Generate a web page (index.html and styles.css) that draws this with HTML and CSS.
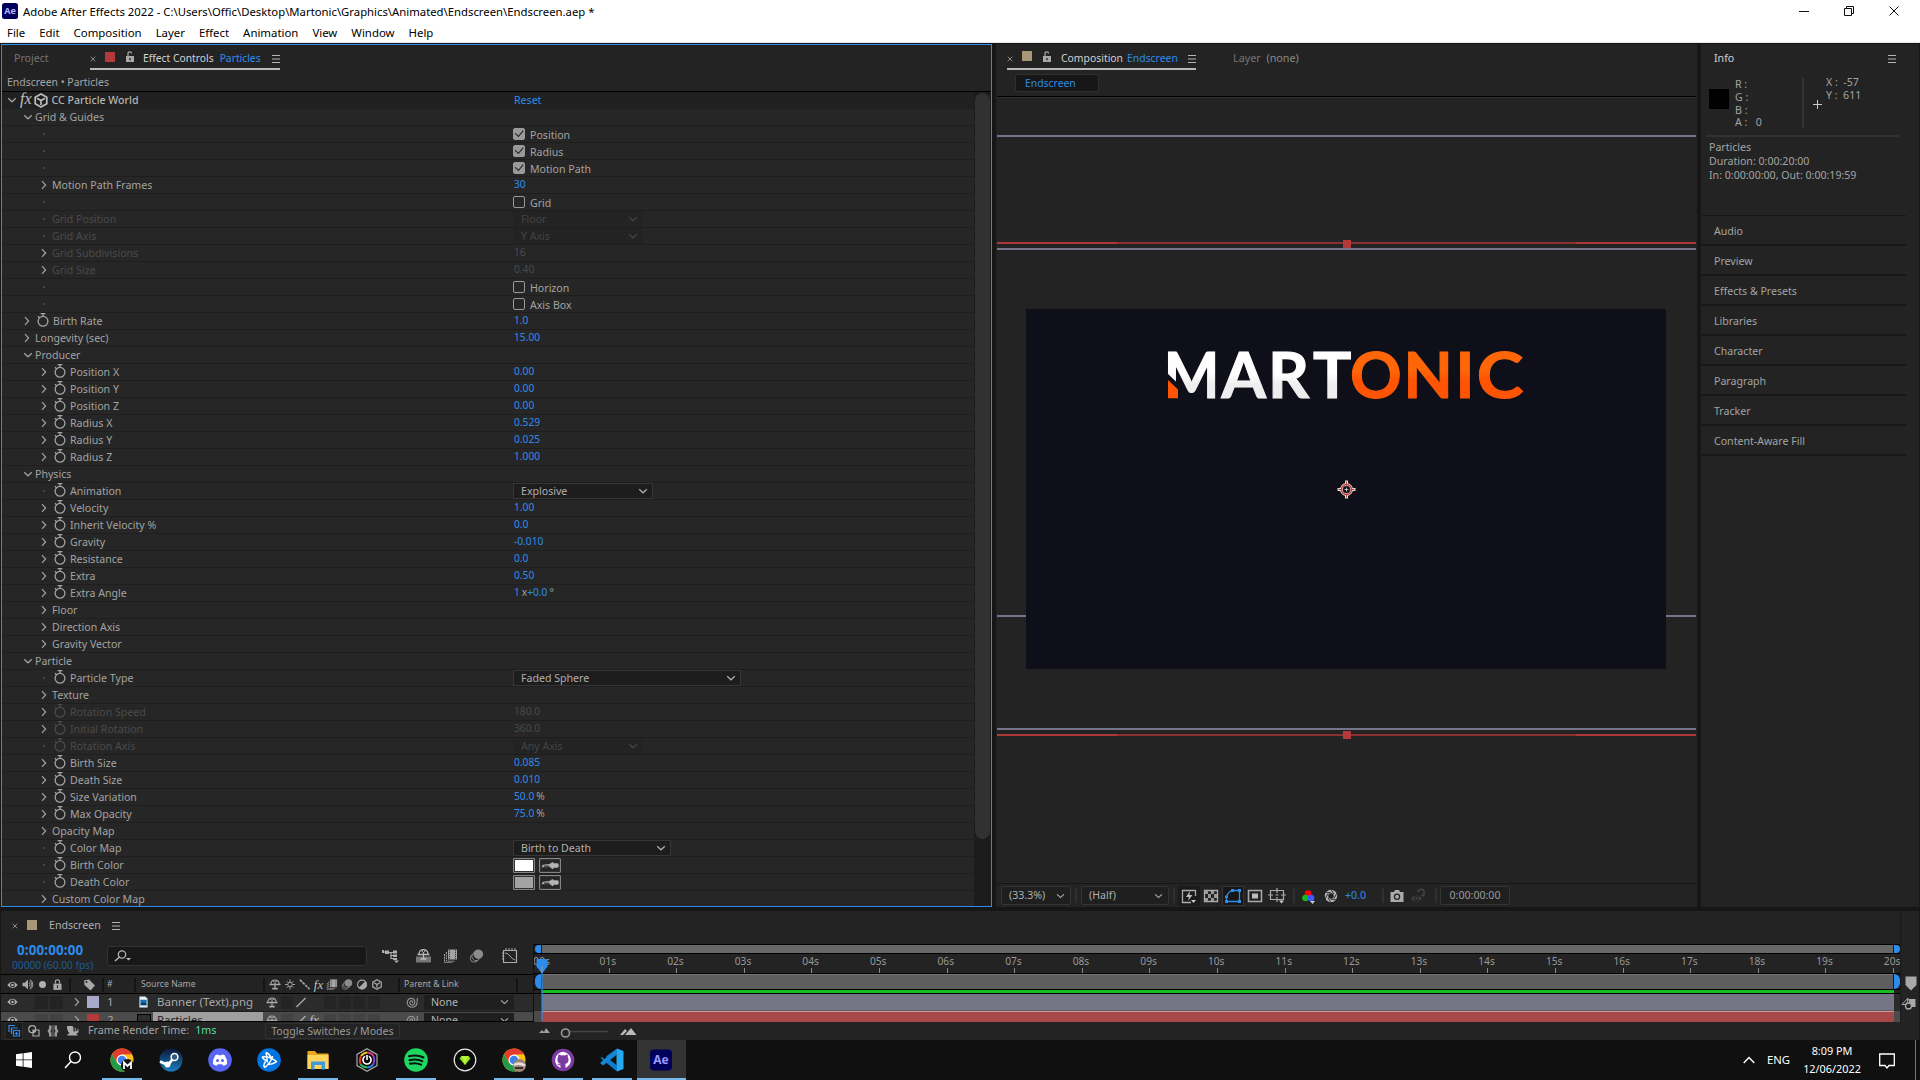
FILE: index.html
```html
<!DOCTYPE html>
<html lang="en">
<head>
<meta charset="utf-8">
<title>Adobe After Effects 2022</title>
<link rel="stylesheet" href="styles.css">
</head>
<body>
<svg class="sprite" aria-hidden="true">
  <symbol id="right" viewBox="0 0 8 10"><path d="M2 1.2 L5.6 5 L2 8.8" fill="none" stroke="currentColor" stroke-width="1.2"/></symbol>
  <symbol id="down" viewBox="0 0 10 8"><path d="M1.2 2.2 L5 5.8 L8.8 2.2" fill="none" stroke="currentColor" stroke-width="1.2"/></symbol>
  <symbol id="watch" viewBox="0 0 12 14"><circle cx="6" cy="8.3" r="4.9" fill="none" stroke="currentColor" stroke-width="1.3"/><path d="M3.6 .7H8.4M6 1V3.6M1 3.2L3 5.2" stroke="currentColor" stroke-width="1.3" fill="none"/></symbol>
  <symbol id="lock-open" viewBox="0 0 10 11"><path d="M1 5H9V11H1Z" fill="currentColor"/><path d="M3 5V2.4Q3 .8 4.8 .8Q6.6 .8 6.6 2.4" fill="none" stroke="currentColor" stroke-width="1.2"/><path d="M5 7V9.2" stroke="#232323" stroke-width="1.3"/></symbol>
  <symbol id="burger" viewBox="0 0 8 8"><path d="M0 .5H8M0 4H8M0 7.5H8" stroke="currentColor" stroke-width="1"/></symbol>
  <symbol id="close" viewBox="0 0 6 6"><path d="M.7 .7L5.3 5.3M5.3 .7L.7 5.3" stroke="currentColor" stroke-width="1"/></symbol>
  <symbol id="dropper" viewBox="0 0 16 6"><path d="M.5 4.6L1.6 2.4L8 1.6V1H9.4V0H11V1H14.5Q15.8 1 15.8 3T14.5 5H11V6H9.4V5H8V4.4Z" fill="currentColor"/><path d="M2.5 3.6H7.5" stroke="#232323"/></symbol>
  <symbol id="shy" viewBox="0 0 13 11"><path d="M2 5.5Q2 .6 6.5 .6T11 5.5Z" fill="none" stroke="currentColor" stroke-width="1.2"/><path d="M4.5 2.2H6M7 2.2H8.5M6.5 3V10" stroke="currentColor" stroke-width="1.3"/><path d="M.5 5.5H12.5M3.5 10H9.5" stroke="currentColor" stroke-width="1.7"/></symbol>
  <symbol id="film" viewBox="0 0 14 14"><path d="M4.5 .5H13.5V10.5H4.5Z" fill="currentColor"/><path d="M6 .8V10.3M12 .8V10.3" stroke="#232323" stroke-width="1" stroke-dasharray="1 1"/><path d="M2.9 3V12.2H11M1 5V13.6H9" fill="none" stroke="currentColor" stroke-width="1" stroke-dasharray="2 .7"/></symbol>
  <symbol id="blur" viewBox="0 0 14 14"><circle cx="4.8" cy="9.2" r="4" fill="none" stroke="#888"/><circle cx="6.6" cy="7.4" r="4.2" fill="#232323" stroke="#888"/><circle cx="8.8" cy="5.2" r="4.8" fill="#8b8b8b"/></symbol>
  <symbol id="eye" viewBox="0 0 11 8"><path d="M.3 4Q5.5 -2.4 10.7 4Q5.5 10.4 .3 4Z" fill="currentColor"/><circle cx="5.5" cy="4" r="2.4" fill="#232323"/><circle cx="5.5" cy="4" r="1.3" fill="currentColor"/></symbol>
  <symbol id="swirl" viewBox="0 0 14 14"><path d="M7 7.5Q8.5 6 7 5.2Q4.6 5 4.6 7.5Q5 10 7.8 9.8Q10.2 9 10 6Q9.4 2.4 6 2.4Q2 3 1.8 7.3Q2.4 12.2 8 12.2Q12.6 11.4 12.6 5.5V2.2" fill="none" stroke="currentColor" stroke-width="1.1"/></symbol>
  <symbol id="cube" viewBox="0 0 14 15"><path d="M7 1L12.8 4.2V10.8L7 14L1.2 10.8V4.2Z" fill="none" stroke="currentColor" stroke-width="1.7"/><path d="M3 5.2L7 7.6L11 5.2M7 7.6V12" fill="none" stroke="currentColor" stroke-width="1.7"/></symbol>
  <symbol id="chrome" viewBox="0 0 24 24"><circle cx="12" cy="12" r="11.5" fill="#fbc116"/><path d="M2 6.3A11.5 11.5 0 0 1 22 6.3L12 6.6L7.2 14.8Z" fill="#e33b2e"/><path d="M2 6.3L7 14.8L12 17.4L13.8 23.4A11.5 11.5 0 0 1 2 6.3Z" fill="#229a4a"/><circle cx="12" cy="12" r="5.5" fill="#fff"/><circle cx="12" cy="12" r="4.3" fill="#3f80ea"/></symbol>
</svg>

<header class="titlebar">
  <svg class="ae-mark" viewBox="0 0 16 16"><rect width="16" height="16" rx="2.5" fill="#00005b"/><text x="8" y="11.3" text-anchor="middle" font-size="9" font-weight="700" fill="#b3b3ff">Ae</text></svg>
  <h1>Adobe After Effects 2022 - C:\Users\Offic\Desktop\Martonic\Graphics\Animated\Endscreen\Endscreen.aep *</h1>
  <svg class="winctl" viewBox="0 0 102 12"><path d="M1 6.5H11M46.5 3.5H53.5V10.5H46.5ZM48.5 3.5V1.5H55.5V8.5H53.5M91.5 1.5L100.5 10.5M100.5 1.5L91.5 10.5" fill="none" stroke="#111" stroke-width="1"/></svg>
</header>
<nav class="menubar"><span>File</span><span>Edit</span><span>Composition</span><span>Layer</span><span>Effect</span><span>Animation</span><span>View</span><span>Window</span><span>Help</span></nav>

<main class="app">
  <div class="workspace">
    <section class="effects">
      <div class="tabs">
        <span class="tab-off">Project</span>
        <div class="tab-on fx-tab"><svg class="x"><use href="#close"/></svg><i class="chip red"></i><svg class="lk"><use href="#lock-open"/></svg><b>Effect Controls</b><em>Particles</em><svg class="bg"><use href="#burger"/></svg></div>
      </div>
      <div class="crumb">Endscreen • Particles</div>
      <div class="fx-body">
        <div class="rows">
          <div class="row head"><div class="n l0"><svg class="c"><use href="#down"/></svg><span class="fxi">fx</span><svg class="cube"><use href="#cube"/></svg><span class="bold">CC Particle World</span></div><div class="v t">Reset</div></div>
          <div class="row"><div class="n l1"><svg class="c d"><use href="#down"/></svg>Grid &amp; Guides</div></div>
          <div class="row"><div class="n l2"><i class="dot"></i></div><div class="k"><i class="cb on"></i>Position</div></div>
          <div class="row"><div class="n l2"><i class="dot"></i></div><div class="k"><i class="cb on"></i>Radius</div></div>
          <div class="row"><div class="n l2"><i class="dot"></i></div><div class="k"><i class="cb on"></i>Motion Path</div></div>
          <div class="row"><div class="n l2"><svg class="c"><use href="#right"/></svg>Motion Path Frames</div><div class="v">30</div></div>
          <div class="row"><div class="n l2"><i class="dot"></i></div><div class="k"><i class="cb"></i>Grid</div></div>
          <div class="row dim"><div class="n l2"><i class="dot"></i>Grid Position</div><div class="sel s130">Floor<svg><use href="#down"/></svg></div></div>
          <div class="row dim"><div class="n l2"><i class="dot"></i>Grid Axis</div><div class="sel s130">Y Axis<svg><use href="#down"/></svg></div></div>
          <div class="row dim"><div class="n l2"><svg class="c"><use href="#right"/></svg>Grid Subdivisions</div><div class="v">16</div></div>
          <div class="row dim"><div class="n l2"><svg class="c"><use href="#right"/></svg>Grid Size</div><div class="v">0.40</div></div>
          <div class="row"><div class="n l2"><i class="dot"></i></div><div class="k"><i class="cb"></i>Horizon</div></div>
          <div class="row"><div class="n l2"><i class="dot"></i></div><div class="k"><i class="cb"></i>Axis Box</div></div>
          <div class="row"><div class="n l1"><svg class="c"><use href="#right"/></svg><svg class="w"><use href="#watch"/></svg>Birth Rate</div><div class="v">1.0</div></div>
          <div class="row"><div class="n l1"><svg class="c"><use href="#right"/></svg>Longevity (sec)</div><div class="v">15.00</div></div>
          <div class="row"><div class="n l1"><svg class="c d"><use href="#down"/></svg>Producer</div></div>
          <div class="row"><div class="n l2"><svg class="c"><use href="#right"/></svg><svg class="w"><use href="#watch"/></svg>Position X</div><div class="v">0.00</div></div>
          <div class="row"><div class="n l2"><svg class="c"><use href="#right"/></svg><svg class="w"><use href="#watch"/></svg>Position Y</div><div class="v">0.00</div></div>
          <div class="row"><div class="n l2"><svg class="c"><use href="#right"/></svg><svg class="w"><use href="#watch"/></svg>Position Z</div><div class="v">0.00</div></div>
          <div class="row"><div class="n l2"><svg class="c"><use href="#right"/></svg><svg class="w"><use href="#watch"/></svg>Radius X</div><div class="v">0.529</div></div>
          <div class="row"><div class="n l2"><svg class="c"><use href="#right"/></svg><svg class="w"><use href="#watch"/></svg>Radius Y</div><div class="v">0.025</div></div>
          <div class="row"><div class="n l2"><svg class="c"><use href="#right"/></svg><svg class="w"><use href="#watch"/></svg>Radius Z</div><div class="v">1.000</div></div>
          <div class="row"><div class="n l1"><svg class="c d"><use href="#down"/></svg>Physics</div></div>
          <div class="row"><div class="n l2"><i class="dot"></i><svg class="w"><use href="#watch"/></svg>Animation</div><div class="sel s139">Explosive<svg><use href="#down"/></svg></div></div>
          <div class="row"><div class="n l2"><svg class="c"><use href="#right"/></svg><svg class="w"><use href="#watch"/></svg>Velocity</div><div class="v">1.00</div></div>
          <div class="row"><div class="n l2"><svg class="c"><use href="#right"/></svg><svg class="w"><use href="#watch"/></svg>Inherit Velocity %</div><div class="v">0.0</div></div>
          <div class="row"><div class="n l2"><svg class="c"><use href="#right"/></svg><svg class="w"><use href="#watch"/></svg>Gravity</div><div class="v">-0.010</div></div>
          <div class="row"><div class="n l2"><svg class="c"><use href="#right"/></svg><svg class="w"><use href="#watch"/></svg>Resistance</div><div class="v">0.0</div></div>
          <div class="row"><div class="n l2"><svg class="c"><use href="#right"/></svg><svg class="w"><use href="#watch"/></svg>Extra</div><div class="v">0.50</div></div>
          <div class="row"><div class="n l2"><svg class="c"><use href="#right"/></svg><svg class="w"><use href="#watch"/></svg>Extra Angle</div><div class="v">1<u>x</u>+0.0<u>°</u></div></div>
          <div class="row"><div class="n l2"><svg class="c"><use href="#right"/></svg>Floor</div></div>
          <div class="row"><div class="n l2"><svg class="c"><use href="#right"/></svg>Direction Axis</div></div>
          <div class="row"><div class="n l2"><svg class="c"><use href="#right"/></svg>Gravity Vector</div></div>
          <div class="row"><div class="n l1"><svg class="c d"><use href="#down"/></svg>Particle</div></div>
          <div class="row"><div class="n l2"><i class="dot"></i><svg class="w"><use href="#watch"/></svg>Particle Type</div><div class="sel s227">Faded Sphere<svg><use href="#down"/></svg></div></div>
          <div class="row"><div class="n l2"><svg class="c"><use href="#right"/></svg>Texture</div></div>
          <div class="row dim"><div class="n l2"><svg class="c"><use href="#right"/></svg><svg class="w"><use href="#watch"/></svg>Rotation Speed</div><div class="v">180.0</div></div>
          <div class="row dim"><div class="n l2"><svg class="c"><use href="#right"/></svg><svg class="w"><use href="#watch"/></svg>Initial Rotation</div><div class="v">360.0</div></div>
          <div class="row dim"><div class="n l2"><i class="dot"></i><svg class="w"><use href="#watch"/></svg>Rotation Axis</div><div class="sel s130">Any Axis<svg><use href="#down"/></svg></div></div>
          <div class="row"><div class="n l2"><svg class="c"><use href="#right"/></svg><svg class="w"><use href="#watch"/></svg>Birth Size</div><div class="v">0.085</div></div>
          <div class="row"><div class="n l2"><svg class="c"><use href="#right"/></svg><svg class="w"><use href="#watch"/></svg>Death Size</div><div class="v">0.010</div></div>
          <div class="row"><div class="n l2"><svg class="c"><use href="#right"/></svg><svg class="w"><use href="#watch"/></svg>Size Variation</div><div class="v">50.0<u>%</u></div></div>
          <div class="row"><div class="n l2"><svg class="c"><use href="#right"/></svg><svg class="w"><use href="#watch"/></svg>Max Opacity</div><div class="v">75.0<u>%</u></div></div>
          <div class="row"><div class="n l2"><svg class="c"><use href="#right"/></svg>Opacity Map</div></div>
          <div class="row"><div class="n l2"><i class="dot"></i><svg class="w"><use href="#watch"/></svg>Color Map</div><div class="sel s157">Birth to Death<svg><use href="#down"/></svg></div></div>
          <div class="row"><div class="n l2"><i class="dot"></i><svg class="w"><use href="#watch"/></svg>Birth Color</div><div class="col"><i class="white"></i><span><svg><use href="#dropper"/></svg></span></div></div>
          <div class="row"><div class="n l2"><i class="dot"></i><svg class="w"><use href="#watch"/></svg>Death Color</div><div class="col"><i class="gray"></i><span><svg><use href="#dropper"/></svg></span></div></div>
          <div class="row"><div class="n l2"><svg class="c"><use href="#right"/></svg>Custom Color Map</div></div>
        </div>
        <div class="scroll"><div class="thumb"></div></div>
      </div>
    </section>

    <section class="comp">
      <div class="tabs">
        <div class="tab-on comp-tab"><svg class="x"><use href="#close"/></svg><i class="chip tan"></i><svg class="lk"><use href="#lock-open"/></svg><b>Composition</b><em>Endscreen</em><svg class="bg"><use href="#burger"/></svg></div>
        <span class="tab-off layer">Layer&nbsp; <s>(none)</s></span>
      </div>
      <div class="flow"><span>Endscreen</span></div>
      <div class="viewer">
        <i class="guide lav g1"></i><i class="guide redl g2"></i><i class="guide lav g3"></i><i class="guide lav g4"></i><i class="guide lav g5"></i><i class="guide redl g6"></i>
        <svg class="canvas" viewBox="0 0 640 360">
          <defs>
            <linearGradient id="w" gradientUnits="userSpaceOnUse" x1="0" y1="43" x2="0" y2="90"><stop offset=".45" stop-color="#fff"/><stop offset=".7" stop-color="#eee"/></linearGradient>
            <linearGradient id="wm" gradientUnits="userSpaceOnUse" x1="0" y1="-46" x2="0" y2="0"><stop offset=".45" stop-color="#fff"/><stop offset=".7" stop-color="#eee"/></linearGradient>
            <linearGradient id="o" gradientUnits="userSpaceOnUse" x1="0" y1="43" x2="0" y2="90"><stop offset=".4" stop-color="#ff6608"/><stop offset=".6" stop-color="#ff5403"/></linearGradient>
            <linearGradient id="oc" gradientUnits="userSpaceOnUse" x1="0" y1="-46" x2="0" y2="0"><stop offset=".4" stop-color="#ff6608"/><stop offset=".6" stop-color="#ff5403"/></linearGradient>
          </defs>
          <rect width="640" height="360" fill="#0f0f19"/>
          <g class="logo">
            <text transform="translate(137.7 88.900) scale(.92 1)" fill="url(#wm)" stroke="url(#wm)">M</text>
            <text y="88.900" x="195.500 242 287" fill="url(#w)" stroke="url(#w)">ART</text>
            <text y="88.900" x="324 377.500 429.500" fill="url(#o)" stroke="url(#o)">ONI</text>
            <text transform="translate(450.800 88.900) scale(1.1 1)" fill="url(#oc)" stroke="url(#oc)">C</text>
          </g>
          <path d="M141 64L152.500 75V90.500H141Z" fill="#0f0f19"/>
          <path d="M142 71L152 80.500V89.300H142Z" fill="url(#o)"/>
          <g transform="translate(320.5 180.500)" fill="none"><path d="M0 -9V9M-9 0H9" stroke="#e6dede" stroke-width="3"/><circle r="5" stroke="#e6dede" stroke-width="3"/><circle r="5" stroke="#b93a3a" stroke-width="1.300"/><circle r="3.500" fill="#0f0f19"/><path d="M0 -8V-4M0 8V4M-8 0H-4M8 0H4" stroke="#b93a3a"/><path d="M0 -2V2M-2 0H2" stroke="#e6dede" stroke-width=".8"/></g>
        </svg>
        <i class="handle h1"></i><i class="handle h2"></i>
      </div>
      <div class="viewbar">
        <div class="box zoom">(33.3%)<svg><use href="#down"/></svg></div><i class="sp"></i>
        <div class="box res">(Half)<svg><use href="#down"/></svg></div><i class="sp s2"></i>
        <svg class="ic dk" viewBox="0 0 22 20"><path d="M17.500 10V4.500H4.500V16.500H13" fill="none" stroke="#aaa" stroke-width="1.300"/><path d="M12 5L8 11H11L10 15L14.500 9H11.500Z" fill="#bbb"/><path d="M13 14H18L15.500 17Z" fill="#ccc"/></svg>
        <svg class="ic" viewBox="0 0 22 20"><path d="M4.500 4.500H17.500V15.500H4.500Z" fill="none" stroke="#aaa" stroke-width="1.300"/><path d="M5 5H8V8H5ZM11 5H14V8H11ZM8 8H11V12H8ZM14 8H17V12H14ZM5 12H8V15H5ZM11 12H14V15H11Z" fill="#999"/></svg>
        <svg class="ic sel-on" viewBox="0 0 22 20"><path d="M4.500 15.500V11Q6 6 10 4.500H17.500V15.500Z" fill="none" stroke="#2d8ceb" stroke-width="1.300"/><path d="M3 14H6V17H3ZM16 14H19V17H16ZM16 3H19V6H16ZM9 3H12V6H9ZM3 9.500H6V12H3Z" fill="#2d8ceb"/></svg>
        <svg class="ic" viewBox="0 0 22 20"><path d="M4.500 4.500H17.500V15.500H4.500Z" fill="none" stroke="#aaa" stroke-width="1.500"/><rect x="8" y="7.500" width="6" height="5" fill="#bbb"/></svg>
        <svg class="ic" viewBox="0 0 22 20"><path d="M4.500 4.500H17.500V13.500H4.500ZM11 2V7M11 11V16M2 9H7M15 9H20M9.500 9H12.500" fill="none" stroke="#aaa" stroke-width="1.200"/><path d="M13 14.500H18L15.500 17.500Z" fill="#ccc"/></svg><i class="sp s3"></i>
        <svg class="ic" viewBox="0 0 22 20"><circle cx="10" cy="7.500" r="3.300" fill="#f00"/><circle cx="7.500" cy="12" r="3.300" fill="#18b818"/><circle cx="13" cy="12" r="3.300" fill="#3b5bff"/><path d="M12 15H17L14.500 18Z" fill="#ccc"/></svg>
        <svg class="ic" viewBox="0 0 22 20"><circle cx="11" cy="10" r="4.500" fill="none" stroke="#b4b4b4" stroke-width="3.400"/><path d="M11 3.500L14 8M17 7L14 12.500M16.500 14L10.500 13M11 16.500L8 12M5 13L8 7.500M5.500 6L11.500 7" stroke="#232323" stroke-width=".9"/></svg>
        <span class="exp">+0.0</span><i class="sp s4"></i>
        <svg class="ic" viewBox="0 0 22 20"><path d="M4.500 6H8L9 4H13L14 6H17.500V16H4.500Z" fill="#aaa"/><circle cx="11" cy="10.800" r="2.600" fill="none" stroke="#232323" stroke-width="1.300"/></svg>
        <svg class="ic" viewBox="0 0 22 20"><path d="M3 12.500Q8 6.500 14 12.500Q8 18.500 3 12.500Z" fill="#444"/><circle cx="8.500" cy="12.500" r="2.600" fill="#232323"/><circle cx="8.500" cy="12.500" r="1.300" fill="#444"/><path d="M9 5H11L12 3.500H15L16 5V9.500H13" fill="none" stroke="#444" stroke-width="1.500"/></svg><i class="sp s5"></i>
        <div class="box time">0:00:00:00</div>
      </div>
    </section>

    <aside class="info">
      <div class="info-head"><b>Info</b><svg class="bg"><use href="#burger"/></svg></div>
      <div class="readout">
        <i class="swatch"></i>
        <div class="rgba"><span>R :</span><span>G :</span><span>B :</span><span>A :&nbsp;&nbsp; 0</span></div>
        <svg class="plus" viewBox="0 0 9 9"><path d="M4.500 0V9M0 4.500H9" stroke="#ccc"/></svg>
        <div class="xy"><span>X :&nbsp; -57</span><span>Y :&nbsp; 611</span></div>
      </div>
      <div class="meta"><p>Particles</p><p>Duration: 0:00:20:00</p><p>In: 0:00:00:00, Out: 0:00:19:59</p></div>
      <ul class="accordion"><li>Audio</li><li>Preview</li><li>Effects &amp; Presets</li><li>Libraries</li><li>Character</li><li>Paragraph</li><li>Tracker</li><li>Content-Aware Fill</li></ul>
    </aside>
  </div>

  <section class="timeline">
    <div class="tl-left">
      <div class="tl-tab"><svg class="x"><use href="#close"/></svg><i class="chip tan"></i><span>Endscreen</span><svg class="bg"><use href="#burger"/></svg></div>
      <div class="tl-tools">
        <div class="tc"><strong>0:00:00:00</strong><span>00000 (60.00 fps)</span></div>
        <div class="search"><svg viewBox="0 0 18 12"><circle cx="8" cy="4.500" r="3.700" fill="none" stroke="#bbb" stroke-width="1.200"/><path d="M5.500 7L1 11" stroke="#bbb" stroke-width="1.300"/><path d="M12 8H17L14.500 10.500Z" fill="#bbb"/></svg></div>
        <svg class="t1" viewBox="0 0 17 14"><path d="M0 3H5M6.500 3.500H12M9 3.500V9.500H12M9 6.500H12" fill="none" stroke="#b0b0b0" stroke-width="1.200"/><path d="M0 1H2V4H0ZM3 1.500H7V5H3ZM11 1.500H15V4.500H11ZM11 5.500H15V8H11ZM11 9H15V11H11ZM12 11.500H17L14.500 14Z" fill="#b0b0b0"/></svg>
        <svg class="t2" viewBox="0 0 15 14"><path d="M0 7.500H15V13.500H0Z" fill="#777"/><use href="#shy" x="1" y="0" width="13" height="11" color="#bbb"/></svg>
        <svg class="t3"><use href="#film"/></svg><svg class="t4"><use href="#blur"/></svg>
        <svg class="t5" viewBox="0 0 16 16"><path d="M1.500 2.500H14.500V14.500H1.500Z" fill="none" stroke="#aaa" stroke-width="1.200"/><path d="M3 5Q6 5 8 8T13 12M4 0V3M7 0V3M10 0V3M13 0V3M0 5H2M0 8H2M0 11H2" fill="none" stroke="#aaa"/></svg>
      </div>
      <div class="tl-head">
        <svg class="e1"><use href="#eye"/></svg>
        <svg class="e2" viewBox="0 0 12 12"><path d="M0 4H2.500L6 .5V11.500L2.500 8H0Z" fill="currentColor"/><path d="M7.500 4Q9 6 7.500 8M8 2Q12 6 8 10M8.500 .5Q14 6 8.500 11.500" fill="none" stroke="currentColor"/></svg>
        <i class="solo"></i>
        <svg class="e4" viewBox="0 0 10 12"><path d="M.5 5H9.500V12H.5Z" fill="currentColor"/><path d="M2.700 5V2.500Q2.700 .8 5 .8T7.300 2.500V5" fill="none" stroke="currentColor" stroke-width="1.300"/><path d="M5 7V10" stroke="#232323" stroke-width="1.300"/></svg>
        <i class="bar"></i>
        <svg class="e5" viewBox="0 0 12 12"><path d="M.5 1.500L5.500 .5L11.500 6.500L7 11.500L1 6Z" fill="currentColor"/><circle cx="3" cy="3" r="1" fill="#232323"/></svg><i class="bar"></i>
        <span class="hash">#</span><i class="bar"></i><span class="src">Source Name</span><i class="bar"></i>
        <span class="sw"><svg><use href="#shy"/></svg>
        <svg viewBox="0 0 12 12"><path d="M6 .5V11.500M.5 6H11.500M2.500 2.500L9.500 9.500M9.500 2.500L2.500 9.500" stroke="currentColor"/><circle cx="6" cy="6" r="2.400" fill="#232323" stroke="currentColor"/></svg>
        <svg viewBox="0 0 12 12"><path d="M.5 1L11 11" stroke="currentColor" stroke-width="1.800" stroke-dasharray="3 1"/></svg>
        <b class="fxs">fx</b><svg><use href="#film"/></svg><svg><use href="#blur"/></svg>
        <svg viewBox="0 0 12 12"><circle cx="6" cy="6" r="4.800" fill="none" stroke="currentColor" stroke-width="1.200"/><path d="M9.800 2.200A5.200 5.200 0 0 1 2.200 9.800Z" fill="currentColor"/></svg>
        <svg><use href="#cube"/></svg></span>
        <i class="bar"></i><span class="par">Parent &amp; Link</span><i class="bar"></i>
      </div>
      <div class="layers">
        <div class="layer-row">
          <svg class="e1"><use href="#eye"/></svg><i class="cell a"></i><i class="cell"></i><svg class="ch"><use href="#right"/></svg><i class="tag lavc"></i><span class="num">1</span>
          <svg class="file" viewBox="0 0 10 13"><path d="M.5 .5H7L9.500 3V12.500H.5Z" fill="#e8f0f6"/><rect x="1.500" y="4" width="7" height="6" fill="#1b6fae"/><path d="M1.500 10L4 6.500L5.500 8L7 7L8.500 10Z" fill="#0a3a66"/></svg>
          <span class="lname">Banner (Text).png</span>
          <span class="sw2"><svg><use href="#shy"/></svg><i></i><svg viewBox="0 0 12 12"><path d="M1 11L11 1" stroke="currentColor" stroke-width="1.500"/></svg><i class="no"></i><i></i><i></i><i></i><i></i></span>
          <svg class="whip"><use href="#swirl"/></svg><div class="none">None<svg><use href="#down"/></svg></div>
        </div>
        <div class="layer-row on">
          <svg class="e1"><use href="#eye"/></svg><i class="cell a"></i><i class="cell"></i><svg class="ch"><use href="#right"/></svg><i class="tag redc"></i><span class="num">2</span>
          <i class="solid"></i>
          <span class="lname hl">Particles</span>
          <span class="sw2"><svg><use href="#shy"/></svg><i></i><svg viewBox="0 0 12 12"><path d="M1 11L11 1" stroke="currentColor" stroke-width="1.500"/></svg><b class="fxs">fx</b><i></i><i></i><i></i><i></i></span>
          <svg class="whip"><use href="#swirl"/></svg><div class="none">None<svg><use href="#down"/></svg></div>
        </div>
      </div>
    </div>
    <div class="tl-right">
      <div class="nav"><i class="kl"></i><i class="track"></i><i class="kr"></i></div>
      <div class="ruler"><span>:00s</span><span>01s</span><span>02s</span><span>03s</span><span>04s</span><span>05s</span><span>06s</span><span>07s</span><span>08s</span><span>09s</span><span>10s</span><span>11s</span><span>12s</span><span>13s</span><span>14s</span><span>15s</span><span>16s</span><span>17s</span><span>18s</span><span>19s</span><span>20s</span></div>
      <div class="work"><i class="kl"></i><i class="track"></i><i class="kr"></i></div>
      <div class="cache"><i></i></div>
      <div class="lbar one"><i></i></div>
      <div class="lbar two"><i></i></div>
      <svg class="playhead" viewBox="0 0 12 62"><path d="M.5 0H11.500V7.500L6.500 14H5.500L.5 7.500Z" fill="#2d8ceb"/><path d="M6 13V62" stroke="#2d8ceb" stroke-width="1.200"/><path d="M6 7V13" stroke="#999"/></svg>
    </div>
    <div class="tl-edge">
      <svg viewBox="0 0 12 15"><path d="M.5 .5H11.500V9L6 14.500L.5 9Z" fill="#a8a8a8"/></svg>
      <svg class="sn" viewBox="0 0 15 13"><path d="M7 2H14.500V10H10Z" fill="#a8a8a8"/><path d="M7 1L1 7.500H6Z" fill="none" stroke="#a8a8a8"/><circle cx="7.500" cy="9" r="3" fill="#232323" stroke="#a8a8a8" stroke-width="1.300"/></svg>
    </div>
    <div class="tl-foot">
      <svg class="f1" viewBox="0 0 16 16"><path d="M3 9V2.500H9M5.500 11V5H11.500M7.500 7.500H13.500V13H7.500ZM10.500 9V12M9 10.500H12" fill="none" stroke="#2d8ceb" stroke-width="1.200"/></svg>
      <svg class="f2" viewBox="0 0 12 12"><circle cx="4.200" cy="4.200" r="3.500" fill="none" stroke="#aaa" stroke-width="1.200"/><path d="M5 5H11V11H5Z" fill="none" stroke="#aaa" stroke-width="1.200"/><path d="M5 5H8Q8 8 5 8Z" fill="#aaa"/></svg>
      <svg class="f3" viewBox="0 0 12 12"><path d="M2 .5H4.500V4L3.500 6L4.500 8V11.500H2V8.500L.5 6L2 3.500ZM10 .5H7.500V4L8.500 6L7.500 8V11.500H10V8.500L11.500 6L10 3.500Z" fill="#999"/><path d="M6 0V12" stroke="#777"/></svg>
      <svg class="f4" viewBox="0 0 13 12"><path d="M.5 1H6.500Q8.500 3 7.500 7H9V3H10V7L12 6V4L13 4V8L10 10H12V11.500H1V10L3.500 9Q.5 7 .5 1Z" fill="#aaa"/></svg>
      <span class="frt">Frame Render Time:</span><span class="ms">1ms</span>
      <span class="toggle">Toggle Switches / Modes</span>
      <svg class="zoomer" viewBox="0 0 100 16"><path d="M0 10L3 7L5 9L7 5L11 10Z" fill="#a0a0a0"/><path d="M26 8.500H69" stroke="#444" stroke-width="1.500"/><circle cx="26.500" cy="10" r="4" fill="#232323" stroke="#999" stroke-width="1.600"/><path d="M81 12L86 6L88 8L84 12ZM86 12L92 5L97.500 12Z" fill="#bbb"/></svg>
    </div>
  </section>
</main>

<footer class="taskbar">
  <div class="apps">
    <span><svg viewBox="0 0 24 24"><path d="M4 6.300L10.700 5.300V11.500H4ZM11.500 5.200L20 4V11.500H11.500ZM4 12.300H10.700V18.700L4 17.700ZM11.500 12.300H20V20L11.500 18.800Z" fill="#fff"/></svg></span>
    <span><svg viewBox="0 0 24 24"><circle cx="14" cy="9.500" r="5.500" fill="none" stroke="#fff" stroke-width="1.400"/><path d="M10 13.500L4 20" stroke="#fff" stroke-width="1.500"/></svg></span>
    <span class="run"><svg viewBox="0 0 24 24"><use href="#chrome"/><circle cx="17.500" cy="17.500" r="6.500" fill="#111"/><path d="M14 21V14.500L17.500 18L21 14.500V21" fill="none" stroke="#fff" stroke-width="1.800"/></svg></span>
    <span><svg viewBox="0 0 24 24"><defs><linearGradient id="st" x2="0" y2="1"><stop stop-color="#0b1838"/><stop offset="1" stop-color="#1a7fc0"/></linearGradient></defs><circle cx="12" cy="12" r="11.500" fill="url(#st)"/><path d="M1 13.500L9 17L15 9.500" fill="none" stroke="#fff" stroke-width="2.800"/><circle cx="8.500" cy="16.500" r="3" fill="#fff"/><circle cx="15.500" cy="9" r="3.400" fill="#35577d" stroke="#fff" stroke-width="1.500"/></svg></span>
    <span><svg viewBox="0 0 24 24"><circle cx="12" cy="12" r="11.800" fill="#5865f2"/><path d="M7.500 7L10 6.500L10.500 7.300H13.500L14 6.500L16.500 7Q19.500 11.500 19 16Q17 17.700 15 17.500L14.200 16.200H9.800L9 17.500Q7 17.700 5 16Q4.500 11.500 7.500 7Z" fill="#fff"/><circle cx="9.500" cy="12.500" r="1.500" fill="#5865f2"/><circle cx="14.500" cy="12.500" r="1.500" fill="#5865f2"/></svg></span>
    <span><svg viewBox="0 0 24 24"><circle cx="12" cy="12" r="11.800" fill="#0074e0"/><path d="M9 4.500L10.500 14.500M9 4.500Q13 6 14.500 11M5 9Q12 7.500 19.500 13.500Q17 16 11 16.500M5 9Q7 12 10 13M15.500 8Q15 13 8 19.500M8 19.500Q5.500 18 8.500 13.500" fill="none" stroke="#fff" stroke-width="1.500" stroke-linejoin="round"/></svg></span>
    <span class="run two"><svg viewBox="0 0 24 24"><path d="M1.500 3H9L11 5.500H22.500V21H1.500Z" fill="#e7a520"/><path d="M1.500 7H22.500V21H1.500Z" fill="#ffd45e"/><path d="M5 13.500H19V21.500H15.500V17H8.500V21.500H5Z" fill="#3d9bdc"/></svg></span>
    <span><svg viewBox="0 0 24 24"><path d="M12 .8L22 6.400V17.600L12 23.200L2 17.600V6.400Z" fill="#0a0a0a" stroke="#aaa" stroke-width="1.200"/><g fill="none" stroke-width="2"><path d="M6 8Q8 5 12 4.500" stroke="#f0c020"/><path d="M12 4.500Q17 5 18.500 8" stroke="#e03a90"/><path d="M18.500 8Q20 12 18.500 16" stroke="#8a40e0"/><path d="M18.500 16Q16 19.500 12 19.500" stroke="#2f7ff0"/><path d="M12 19.500Q7 19 5.500 16" stroke="#25c060"/><path d="M5.500 16Q4 12 6 8" stroke="#e04020"/></g><circle cx="12" cy="12" r="4" fill="none" stroke="#fff" stroke-width="1.700"/><path d="M12 7V12" stroke="#0a0a0a" stroke-width="3.500"/><path d="M12 7V12" stroke="#fff" stroke-width="1.600"/></svg></span>
    <span class="run"><svg viewBox="0 0 24 24"><circle cx="12" cy="12" r="11.800" fill="#1ed760"/><path d="M5 8.300Q13 6 19.500 9.500M5.500 12.200Q12.500 10.300 18.300 13.200M6 15.700Q12 14.200 17 16.700" fill="none" stroke="#111" stroke-width="2" stroke-linecap="round"/></svg></span>
    <span><svg viewBox="0 0 24 24"><circle cx="12" cy="12" r="10.800" fill="#0a0a0a" stroke="#e8e8e8" stroke-width="1.200"/><path d="M8.500 8H15.500L17.500 10.500L12 17L6.500 10.500Z" fill="#8be01c"/><path d="M8.500 8H15.500L12 17Z" fill="#b8f33c"/></svg></span>
    <span class="run"><svg viewBox="0 0 24 24"><use href="#chrome"/><circle cx="17.500" cy="17.500" r="6.500" fill="#9b8578"/><path d="M12 17Q17 14 23 17.500" stroke="#e8e0da" stroke-width="2.500" fill="none"/><path d="M13 20H21" stroke="#3a2c28" stroke-width="2"/></svg></span>
    <span class="run"><svg viewBox="0 0 24 24"><circle cx="12" cy="12" r="11.300" fill="#7d3aa0"/><path d="M12 3.800A8.400 8.400 0 0 0 9.500 20V17.500Q7 17.500 6.300 15.800H8Q9 17 9.800 16Q6 15 6.500 11Q6.500 9.500 7.300 8.700Q7 7.500 7.500 6.500Q9 6.500 10 7.500Q12 7 14 7.500Q15 6.500 16.500 6.500Q17 7.500 16.700 8.700Q17.500 9.500 17.500 11Q18 15 14.200 16Q14.700 17 14.500 20A8.400 8.400 0 0 0 12 3.800Z" fill="#fff"/></svg></span>
    <span class="run"><svg viewBox="0 0 24 24"><path d="M17 .5L23.500 3V21L17 23.500L16.500 18V6Z" fill="#25a9f0"/><path d="M17 .5L5 11.500L2 9L.5 10L17 23.500V17.500L6 8.500Z" fill="#0a7fd0"/><path d="M17 .5V6.500L3 17.500L.5 15.500V14.500Z" fill="#1588d4"/></svg></span>
    <span class="run act"><svg viewBox="0 0 24 24"><rect x="1" y="1.500" width="22" height="21" rx="4" fill="#00005b"/><text x="12" y="16" text-anchor="middle" font-size="12" font-weight="700" fill="#9999ff">Ae</text></svg></span>
  </div>
  <div class="tray">
    <svg class="up" viewBox="0 0 12 8"><path d="M.7 7L6 1.500L11.300 7" fill="none" stroke="#fff" stroke-width="1.400"/></svg>
    <span class="eng">ENG</span>
    <div class="clock"><span>8:09 PM</span><span>12/06/2022</span></div>
    <svg class="note" viewBox="0 0 16 16"><path d="M.7 1H15.300V12.500H10L8 15L6 12.500H.7Z" fill="none" stroke="#fff" stroke-width="1.300"/></svg>
    <i class="peek"></i>
  </div>
</footer>
</body>
</html>
```
FILE: styles.css
```css
* { box-sizing: border-box; }
html, body { margin: 0; height: 100%; }
body {
  width: 1920px; height: 1080px; overflow: hidden;
  display: grid; grid-template-rows: 22px 21px 997px 40px;
  background: #161616; color: #a3a3a3;
  font: 10.6px/1 "Noto Sans", "Open Sans", sans-serif;
  white-space: nowrap;
}
i, em, u, s { font-style: normal; text-decoration: none; }
b { font-weight: 400; }
svg { display: block; flex: none; overflow: visible; }
h1, p, ul { margin: 0; padding: 0; font-weight: 400; font-size: inherit; }
.sprite { position: absolute; width: 0; height: 0; }

/* window chrome */
.titlebar { display: flex; align-items: center; background: #fff; color: #000; padding: 2px 20px 0 2px; }
.ae-mark { width: 16px; height: 16px; margin: -2px 5px 0 0; }
.titlebar h1 { font-size: 11.32px; line-height: 20px; }
.winctl { width: 102px; height: 12px; margin: -3px 0 0 auto; }
.menubar { display: flex; align-items: center; gap: 14px; background: #fff; color: #000; font-size: 11.4px; padding: 2px 0 0 7px; border-bottom: 1px solid #e8e8e8; }

.app { display: flex; flex-direction: column; gap: 4px; padding: 1px 1px 0; }
.workspace { display: flex; gap: 4px; height: 863px; }
.tabs { display: flex; height: 26px; color: #757575; font-size: 10.3px; }
.tab-off { line-height: 28px; }
.tab-on { display: flex; align-items: center; border-bottom: 2px solid #b8b8b8; padding-top: 4px; }
.tab-on b, .info-head b { color: #d2d2d2; }
.tab-on em { color: #2d8ceb; }
.x { width: 6px; height: 6px; color: #8a8a8a; }
.bg { width: 8px; height: 8px; color: #b5b5b5; }
.lk { width: 10px; height: 11px; color: #aaa; }
.chip { width: 10px; height: 10px; flex: none; }
.red { background: #b33a3a; }
.tan { background: #a99777; }

/* effect controls */
.effects { width: 991px; border: 1px solid #2d8ceb; background: #232323; display: flex; flex-direction: column; overflow: hidden; }
.effects .tabs { padding-left: 12px; height: 25px; }
.effects .tab-off { width: 76px; line-height: 27px; font-size: 10.6px; }
.fx-tab { width: 190px; }
.fx-tab .chip { margin: -3px 11px 0 9px; }
.fx-tab .lk { margin: -4px 8px 0 -1px; }
.fx-tab em { margin-left: 6px; }
.fx-tab .bg, .comp-tab .bg { margin-left: auto; }
.crumb { height: 22px; line-height: 24px; padding-left: 5px; border-bottom: 1px solid #000; font-size: 10.45px; }
.fx-body { flex: 1; min-height: 0; display: flex; }
.rows { flex: 1; overflow: hidden; background: #262626; }
.row { height: 17px; display: flex; align-items: center; border-bottom: 1px solid #1e1e1e; }
.row.head { background: #202020; border: 0; padding-bottom: 1px; }
.n { width: 512px; display: flex; align-items: center; }
.l0 { padding-left: 1px; } .l1 { padding-left: 17px; } .l2 { padding-left: 34px; }
.c { width: 8px; height: 10px; margin: 0 4px; color: #a3a3a3; }
.c.d, .l0 .c { width: 10px; height: 8px; margin: 0 2px 0 4px; }
.dot { width: 2px; height: 2px; background: #444; margin: 0 7px; }
.w { width: 12px; height: 14px; margin: -2px 4px 0 2px; color: #a3a3a3; }
.fxi, .fxs { font: italic 13px "Liberation Serif", serif; color: #c0c0c0; }
.fxi { font-size: 16px; margin: -2px 2px 0 1px; }
.cube { width: 14px; height: 15px; color: #bdbdbd; margin-right: 4px; }
.bold { font-weight: 500; color: #b4b4b4; }
.v { color: #2d8ceb; font-size: 10.2px; padding-bottom: 2px; }
.v.t { padding: 0; font-size: 10.6px; }
.v u { color: #a3a3a3; margin: 0 0 0 2px; }
.k { display: flex; align-items: center; gap: 5px; padding-top: 2px; margin-left: -1px; }
.cb { width: 12px; height: 12px; margin-top: -3px; border: 1.5px solid #9a9a9a; border-radius: 2px; display: grid; place-items: center; }
.cb.on { background: #999; }
.cb.on::after { content: ""; width: 7px; height: 3.500px; border: solid #1c1c1c; border-width: 0 0 1.800px 1.800px; transform: translateY(-1px) rotate(-50deg); }
.sel { height: 16px; margin-left: -1px; display: flex; align-items: center; justify-content: space-between; padding: 0 4px 0 7px; border: 1px solid #363636; background: #1d1d1d; color: #b0b0b0; }
.sel svg { width: 10px; height: 8px; }
.s130 { width: 130px; } .s139 { width: 140px; } .s227 { width: 228px; } .s157 { width: 158px; }
.dim { color: #4a4a4a; }
.dim .v, .dim .w { color: #4a4a4a; }
.dim .sel { background: #232323; border-color: #232323; color: #434343; }
.col { display: flex; gap: 4px; margin-left: -1px; }
.col > * { width: 22px; height: 15px; border: 1px solid #858585; border-radius: 1px; display: grid; place-items: center; box-shadow: inset 0 0 0 1px #333; }
.col svg { width: 18px; height: 7px; color: #b4b4b4; }
.white { background: #fff; } .gray { background: #a3a3a3; }
.scroll { width: 17px; background: #1c1c1c; padding: 1px 1px 0; }
.thumb { height: 746px; border-radius: 8px; background: #313131; }

/* composition */
.comp { width: 701px; background: #232323; display: flex; flex-direction: column; }
.comp .tabs { padding-left: 11px; font-size: 10.8px; }
.comp .tab-on { width: 189px; padding-top: 5px; }
.comp-tab .chip { margin: -5px 11px 0 9px; }
.comp-tab .lk { margin: -5px 9px 0 -1px; }
.comp-tab em { margin-left: 4px; }
.comp-tab b, .comp-tab em { font-size: 10.4px; }
.layer { margin-left: 37px; } .layer s { color: #8a8a8a; }
.flow { height: 27px; margin: 0 1px; padding: 4px 0 0 18px; border-bottom: 1px solid #000; box-shadow: 0 1px #303030; display: flex; }
.flow span { width: 84px; height: 18px; padding-left: 9px; line-height: 16px; color: #2d8ceb; background: #171717; border: 1px solid #303030; border-radius: 2px; font-size: 10.4px; }
.viewer { flex: 1; position: relative; margin: 0 1px; overflow: hidden; }
.guide { position: absolute; left: 0; right: 0; height: 2px; }
.lav { background: #74748a; }
.redl { background: linear-gradient(90deg, #ad3838 120px, #8a3030 120px 579px, #ad3838 579px); }
.g1 { top: 38px; } .g2 { top: 145px; } .g3 { top: 151px; } .g4 { top: 518px; } .g5 { top: 631px; } .g6 { top: 637px; }
.canvas { position: absolute; left: 29px; top: 212px; width: 640px; height: 360px; }
.logo { font: 700 64px Lato, sans-serif; stroke-width: 1.1px; }
.handle { position: absolute; left: 346px; width: 8px; height: 8px; background: #b33a3a; }
.h1 { top: 143px; } .h2 { top: 634px; }
.viewbar { height: 24px; padding: 0 0 0 5px; border-top: 1px solid #171717; display: flex; align-items: center; }
.box { height: 19px; display: flex; align-items: center; justify-content: space-between; padding: 0 5px 0 7px; border: 1px solid #343434; border-radius: 2px; background: #1f1f1f; color: #b0b0b0; }
.box svg { width: 9px; height: 8px; }
.zoom { width: 70px; } .res { width: 88px; }
.sp { width: 2px; height: 15px; background: #303030; margin: 0 4px; }
.time { width: 70px; justify-content: center; padding: 0; color: #999; margin-left: -1px; }
.ic { width: 22px; height: 20px; }
.dk { background: #1b1b1b; }
.sel-on { background: #171717; box-shadow: inset 0 0 0 1px #343434; }
.exp { color: #2d8ceb; margin-left: 3px; width: 22px; }
.s2 { margin-right: 3px; } .s3 { margin: 0 3px 0 5px; } .s4 { margin: 0 2px 0 15px; } .s5 { margin: 0 4px 0 5px; }

/* info */
.info { width: 218px; background: #232323; }
.info-head { height: 29px; display: flex; align-items: center; justify-content: space-between; padding: 0 23px 0 13px; }
.readout { height: 64px; margin: 0 20px 0 5px; border-bottom: 2px solid #323232; display: flex; padding: 5px 0 0 3px; }
.swatch { width: 20px; height: 20px; margin-top: 11px; background: #000; }
.rgba { width: 69px; height: 50px; margin-left: 6px; border-right: 2px solid #323232; margin-top: 0; }
.rgba span, .xy span { display: block; }
.rgba span { line-height: 12.800px; }
.plus { width: 9px; height: 9px; margin: 22px 4px 0 9px; }
.xy { line-height: 13px; margin-top: -2px; }
.meta { padding: 3px 0 0 8px; height: 78px; line-height: 14px; }
.accordion { list-style: none; margin: 0 13px 0 1px; border-top: 1px solid #171717; }
.accordion li { height: 30px; line-height: 30px; padding-left: 12px; border-bottom: 2px solid #171717; }

/* timeline */
.timeline { height: 129px; background: #232323; display: grid; grid-template: 111px 18px / 533px 1367px 18px; }
.tl-left { display: flex; flex-direction: column; overflow: hidden; padding-right: 1px; border-bottom: 1px solid #000; background: linear-gradient(#111, #111) right bottom / 1px 78px no-repeat; }
.tl-tab { height: 28px; display: flex; align-items: center; padding: 1px 0 0 11px; color: #b0b0b0; }
.tl-tab .chip { margin: -2px 12px 0 9px; }
.tl-tab .bg { margin-left: 11px; }
.tl-tools { height: 35px; display: flex; align-items: center; padding-left: 11px; }
.tc { width: 95px; display: flex; flex-direction: column; }
.tc strong { font-size: 13.400px; line-height: 16px; color: #2d8ceb; padding-left: 5px; letter-spacing: .15px; }
.tc span { color: #1d5a96; font-size: 10.2px; line-height: 14px; }
.search { width: 260px; height: 20px; margin-top: -2px; border: 1px solid #323232; border-radius: 3px; background: #181818; padding: 3px 6px; }
.search svg { width: 18px; height: 12px; }
.tl-tools > svg { margin-top: -1px; }
.t1 { width: 17px; height: 14px; margin-left: 15px; }
.t2 { width: 15px; height: 14px; margin-left: 17px; }
.t3 { width: 15px; height: 14px; margin-left: 12px; }
.t4 { width: 15px; height: 14px; margin-left: 11px; }
.t5 { width: 16px; height: 16px; margin-left: 18px; }
.tl-head { height: 20px; flex: none; display: flex; align-items: center; border-top: 1px solid #000; border-bottom: 1px solid #000; padding: 1px 0 0 6px; color: #a8a8a8; font-size: 8.700px; }
.e1 { width: 11px; height: 8px; color: #b0b0b0; }
.e2 { width: 12px; height: 11px; margin-left: 4px; }
.solo { width: 7px; height: 7px; border-radius: 50%; background: #b0b0b0; margin: 0 7px 0 5px; }
.e4 { width: 9px; height: 11px; margin-right: 7px; }
.bar { width: 2px; height: 14px; background: #151515; flex: none; }
.e5 { width: 13px; height: 12px; margin: 0 6px 0 12px; }
.hash { width: 30px; padding-left: 3px; } .src { width: 127px; padding-left: 5px; } .par { width: 116px; padding-left: 4px; }
.sw { width: 133px; display: flex; align-items: center; justify-content: space-between; padding: 0 15px 0 4px; }
.sw svg { width: 12px; height: 11px; }
.layers { flex: 1; overflow: hidden; }
.layer-row { height: 18px; display: flex; align-items: center; padding: 0 0 1px 6px; background: #2b2b2b; border-bottom: 1px solid #1c1c1c; font-size: 11.5px; color: #a8a8a8; }
.layer-row.on { background: #4b4b4b; }
.cell { width: 13px; height: 13px; background: #232323; margin-left: 2px; }
.cell.a { margin-left: 17px; }
.on .cell, .on .sw2 i { background: #424242; }
.ch { width: 8px; height: 10px; margin: 0 6px 0 10px; }
.tag { width: 12px; height: 12px; }
.lavc { background: #a9a9cb; } .redc { background: #b33a3a; }
.num { width: 33px; padding-left: 8px; }
.file { width: 9px; height: 12px; margin: 0 0 0 7px; }
.solid { width: 14px; height: 14px; margin: 1px 0 0 5px; border: 1px solid #000; background: #2d2d2d; }
.file + .lname { width: 115px; padding-left: 9px; letter-spacing: .03px; }
.hl { background: #9f9f9f; color: #222; height: 16px; line-height: 15px; padding-left: 4px; width: 110px; margin-left: 2px; }
.sw2 { width: 134px; display: flex; align-items: center; gap: 2.500px; padding-left: 3px; }
.sw2 svg { width: 12px; height: 11px; }
.sw2 i { width: 12px; height: 13px; background: #242424; }
.sw2 .no { background: none; }
.sw2 .fxs { width: 12px; }
.whip { width: 14px; height: 13px; margin: 0 5px 0 8px; color: #999; }
.none { width: 90px; height: 15px; background: #1f1f1f; display: flex; align-items: center; justify-content: space-between; padding: 0 5px 0 7px; font-size: 10.6px; color: #b4b4b4; }
.none svg { width: 9px; height: 8px; }

.tl-right { position: relative; overflow: hidden; padding-top: 33px; border-right: 1px solid #1b1b1b; }
.nav, .work { display: flex; padding-left: 1px; background: #1a1a1a; }
.nav { height: 10px; border: solid #000; border-width: 1px 0; }
.nav .kl, .work .kl { width: 6px; background: #2d8ceb; border-radius: 6px 0 0 6px; margin-right: 1px; }
.nav .track, .work .track { width: 1352px; background: #676767; }
.kr { width: 6px; background: #2d8ceb; border-radius: 0 6px 6px 0; margin-left: 1px; }
.ruler { height: 19px; display: flex; margin-left: -26.300px; width: 1500px; color: #999; font-size: 10.2px; line-height: 15px; text-align: center; }
.ruler span { width: 67.600px; flex: none; padding-right: 2.500px; background: linear-gradient(#8a8a8a, #8a8a8a) center bottom / 1px 5px no-repeat; }
.work { height: 17px; border: solid #000; border-width: 1px 0; }
.work .track { background: #5e5e5e; border-top: 1px solid #777; }
.cache { height: 4px; padding-left: 8px; border-bottom: 1px solid #000; }
.cache i { display: block; width: 1352px; height: 3px; background: #17bd22; }
.lbar { height: 18px; padding-left: 8px; background: #2b2b2b; border-bottom: 1px solid #1c1c1c; }
.lbar i { display: block; width: 1352px; height: 17px; background: #757585; border-bottom: 1px solid #5a5a68; }
.lbar.two { background: #4b4b4b; border: 0; margin-top: -1px; }
.lbar.two i { background: #a64848; border-top: 1px solid #d59a9a; border-bottom: 0; }
.playhead { position: absolute; left: 2px; top: 48px; width: 12px; height: 62px; }
.tl-edge { padding: 65px 0 0 3px; }
.tl-edge svg { width: 12px; height: 15px; margin-left: 1px; }
.tl-edge .sn { width: 15px; height: 13px; margin: 6px 0 0 -3px; }
.tl-foot { grid-column: 1 / -1; display: flex; align-items: center; padding: 0 0 1px 5px; font-size: 10.700px; }
.f1 { width: 16px; height: 16px; background: #1b1b1b; box-shadow: 0 0 0 1px #2d2d2d; }
.f2 { width: 12px; height: 12px; margin-left: 6px; } .f3 { width: 12px; height: 12px; margin-left: 7px; } .f4 { width: 13px; height: 11px; margin: 0 9px 0 7px; }
.ms { color: #5ddba4; margin-left: 6px; width: 71px; }
.toggle { width: 135px; height: 16px; line-height: 14px; border: 1px solid #303030; border-radius: 2px; padding-left: 5px; color: #9a9a9a; font-size: 10.600px; margin-left: -1px; }
.zoomer { width: 100px; height: 16px; margin-left: 139px; }

/* taskbar */
.taskbar { background: #101010; display: flex; justify-content: space-between; color: #fff; }
.apps { display: flex; margin-left: -1px; }
.apps span { width: 49.070px; height: 40px; display: grid; place-items: center; }
.apps svg { width: 24px; height: 24px; }
.run { background: linear-gradient(#76b9ed, #76b9ed) center bottom / 40px 2px no-repeat; }
.apps .act { background: linear-gradient(#76b9ed, #76b9ed) bottom / 100% 2px no-repeat #333; }
.tray { display: flex; align-items: center; }
.up { width: 12px; height: 8px; }
.eng { margin-left: 12px; font-size: 11.3px; }
.clock { width: 84px; text-align: center; line-height: 18px; font-size: 10.850px; }
.clock span { display: block; }
.note { width: 16px; height: 16px; margin: 1px 20px 0 5px; }
.peek { width: 5px; height: 40px; border-left: 1px solid #777; }
```
